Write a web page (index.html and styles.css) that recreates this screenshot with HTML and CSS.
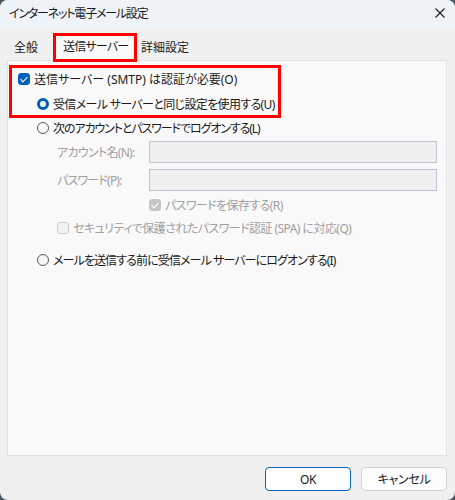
FILE: index.html
```html
<!DOCTYPE html>
<html lang="ja">
<head>
  <meta charset="UTF-8">
  <title>インターネット電子メール設定</title>
  <link rel="stylesheet" href="styles.css">
</head>
<body>
  <div class="window">
    <!-- barra de título -->
    <div class="titlebar">
      <span class="title">インターネット電子メール設定</span>
      <svg class="close" width="10" height="10" viewBox="0 0 10 10">
        <path d="M0.5 0.5 L9.5 9.5 M9.5 0.5 L0.5 9.5" stroke="#1b1b1b" stroke-width="1.1" fill="none"/>
      </svg>
    </div>

    <!-- pestañas -->
    <div class="tabs">
      <div class="tab tab-first">全般</div>
      <div class="tab tab-active">送信サーバー</div>
      <div class="tab tab-last">詳細設定</div>
    </div>

    <div class="panel">
      <div class="mark">
        <div class="row row-auth">
          <span class="box checked"></span>
          <span>送信サーバー (SMTP) は認証が必要(O)</span>
        </div>
        <div class="row row-same">
          <span class="radio on"></span>
          <span>受信メール サーバーと同じ設定を使用する(U)</span>
        </div>
      </div>

      <div class="row row-logon">
        <span class="radio"></span>
        <span>次のアカウントとパスワードでログオンする(L)</span>
      </div>

      <div class="field field-account">
        <span class="field-label">アカウント名(N):</span>
        <span class="input"></span>
      </div>
      <div class="field field-password">
        <span class="field-label">パスワード(P):</span>
        <span class="input"></span>
      </div>

      <div class="row row-save disabled">
        <span class="box checked off"></span>
        <span>パスワードを保存する(R)</span>
      </div>
      <div class="row row-spa disabled">
        <span class="box off"></span>
        <span>セキュリティで保護されたパスワード認証 (SPA) に対応(Q)</span>
      </div>

      <div class="row row-before">
        <span class="radio"></span>
        <span>メールを送信する前に受信メール サーバーにログオンする(I)</span>
      </div>
    </div>

    <div class="buttons">
      <button class="btn btn-default">OK</button>
      <button class="btn">キャンセル</button>
    </div>
  </div>
</body>
</html>
```

FILE: styles.css
```css
/* Estilo general */
html {
  background-color: #4b5663;
}

body {
  margin: 0;
  font-family: "Noto Sans", "Noto Sans CJK JP", sans-serif;
  font-size: 12px;
  font-feature-settings: "palt";
  letter-spacing: -0.6px;
  color: #1b1b1b;
}

.window {
  width: 455px;
  height: 500px;
  background-color: #f0f0f0;
  border-radius: 8px;
  overflow: hidden;
  display: flex;
  flex-direction: column;
}

/* Barra de título */
.titlebar {
  height: 29px;
  background-color: #eef3f8;
  display: flex;
  align-items: center;
  justify-content: space-between;
  padding: 0 10px 3px 9px;
  box-sizing: border-box;
}

.title {
  font-size: 12px;
  letter-spacing: -1.2px;
}

.close {
  display: block;
}

/* Pestañas */
.tabs {
  height: 31px;
  display: flex;
  align-items: flex-end;
  padding-left: 7px;
}

.tab {
  height: 24px;
  line-height: 23px;
  box-sizing: border-box;
  white-space: nowrap;
}

.tab-first {
  width: 46px;
  padding-left: 7px;
  letter-spacing: 0;
}

.tab-active {
  position: relative;
  z-index: 1;
  width: 84px;
  height: 29px;
  margin-bottom: -2px;
  line-height: 22px;
  padding-left: 7px;
  border: 3px solid #ff0000;
  background-color: #f9f9f9;
  letter-spacing: -0.8px;
}

.tab-last {
  padding-left: 4px;
  letter-spacing: 0;
}

/* Panel */
.panel {
  margin: 0 8px 0 7px;
  height: 396px;
  box-sizing: border-box;
  background-color: #f9f9f9;
  border: 1px solid #e3e3e3;
}

.mark {
  margin: 4px 0 0 1px;
  width: 272px;
  box-sizing: border-box;
  border: 3px solid #ff0000;
}

.row {
  display: flex;
  align-items: center;
  height: 20px;
  gap: 4px;
  white-space: nowrap;
}

.row-auth {
  height: 22px;
  padding-left: 6px;
  letter-spacing: 0;
}

.row-same {
  height: 22px;
  margin-top: 3px;
  padding-left: 25px;
  letter-spacing: -0.65px;
}

.row-logon {
  padding-left: 29px;
  letter-spacing: -1.1px;
}

.row-save {
  margin-top: 4px;
  padding-left: 141px;
}

.row-spa {
  margin-top: 3px;
  padding-left: 49px;
  letter-spacing: -0.55px;
}

.row-before {
  margin-top: 12px;
  padding-left: 29px;
  letter-spacing: -0.9px;
}

.disabled {
  color: #a0a0a0;
}

/* Campos de texto */
.field {
  display: flex;
  align-items: center;
  padding-left: 49px;
  white-space: nowrap;
}

.field-account {
  margin-top: 3px;
  letter-spacing: -0.7px;
}

.field-password {
  margin-top: 6px;
  letter-spacing: -0.8px;
}

.field-label {
  width: 92px;
  color: #a0a0a0;
}

.input {
  width: 288px;
  height: 22px;
  box-sizing: border-box;
  background-color: #f0f0f0;
  border: 1px solid #b9c5d5;
}

/* Casillas y botones de opción */
.box {
  width: 12px;
  height: 12px;
  box-sizing: border-box;
  border: 1px solid #5d5d5d;
  border-radius: 3px;
  flex-shrink: 0;
  position: relative;
}

.box.checked {
  background-color: #005fb8;
  border-color: #005fb8;
}

.box.checked::after {
  content: "";
  position: absolute;
  left: 3px;
  top: 1px;
  width: 3px;
  height: 6px;
  border: solid #ffffff;
  border-width: 0 1.3px 1.3px 0;
  transform: rotate(45deg);
}

.box.off {
  background-color: #f3f3f3;
  border-color: #cdcdcd;
}

.box.checked.off {
  background-color: #c6c6c6;
  border-color: #c6c6c6;
}

.radio {
  width: 12px;
  height: 12px;
  box-sizing: border-box;
  border: 1px solid #5d5d5d;
  border-radius: 50%;
  background-color: #f7f7f7;
  flex-shrink: 0;
}

.radio.on {
  border: 3.5px solid #005fb8;
  background-color: #ffffff;
}

/* Botones */
.buttons {
  display: flex;
  justify-content: flex-end;
  gap: 10px;
  margin: 11px 8px 0 0;
}

.btn {
  width: 86px;
  height: 24px;
  font-family: inherit;
  font-size: 12px;
  font-feature-settings: "palt";
  letter-spacing: -0.3px;
  color: #1b1b1b;
  background-color: #fdfdfd;
  border: 1px solid #d0d0d0;
  border-radius: 4px;
  padding: 0;
}

.btn-default {
  border-color: #0067c0;
}
```
